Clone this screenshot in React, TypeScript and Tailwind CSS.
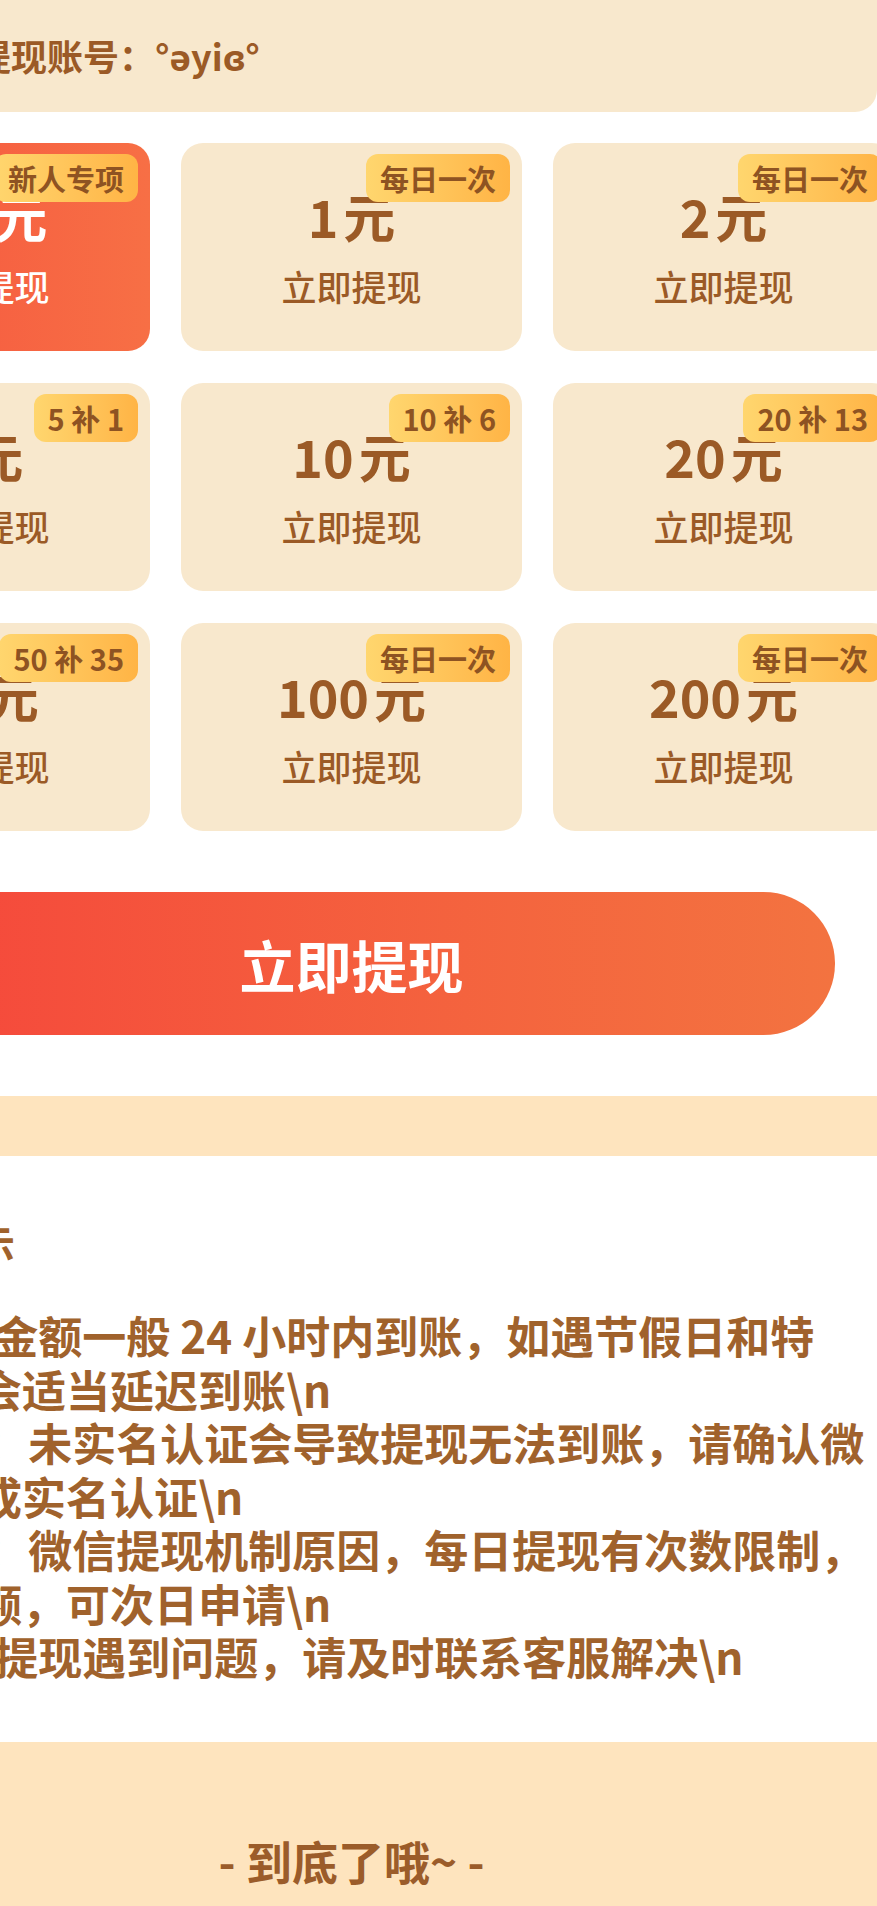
const cards = [
  { amount: "0.3", tag: "新人专项", hot: true },
  { amount: "1", tag: "每日一次" },
  { amount: "2", tag: "每日一次" },
  { amount: "5", tag: "5 补 1" },
  { amount: "10", tag: "10 补 6" },
  { amount: "20", tag: "20 补 13" },
  { amount: "50", tag: "50 补 35" },
  { amount: "100", tag: "每日一次" },
  { amount: "200", tag: "每日一次" },
];

// each tip is pre-split into its display lines
const tips = [
  ["1.  提现金额一般 24 小时内到账，如遇节假日和特", "殊情况会适当延迟到账\\n"],
  ["2. 注意：未实名认证会导致提现无法到账，请确认微", "信已完成实名认证\\n"],
  ["3. 提示：微信提现机制原因，每日提现有次数限制，", "如遇超额，可次日申请\\n"],
  ["4.  如果提现遇到问题，请及时联系客服解决\\n"],
];

function AmountCard({ amount, tag, hot }: { amount: string; tag: string; hot?: boolean }) {
  return (
    <div
      className={`relative h-[208px] rounded-[22px] flex flex-col items-center ${
        hot ? "bg-gradient-to-r from-[#F5503E] to-[#F76F45] text-white" : "bg-[#F8E8CD] text-[#9B5A26]"
      }`}
    >
      <div className="absolute top-[11px] right-[12px] h-[48px] px-[14px] rounded-[12px] bg-gradient-to-r from-[#FFD66E] to-[#FFB445] flex items-center text-[29px] font-semibold text-[#8E5322] leading-none whitespace-pre">
        {tag}
      </div>
      <div className="mt-[47px] text-[52px] leading-[52px] font-bold flex">
        <span>{amount}</span>
        <span className="ml-[5px]">元</span>
      </div>
      <div className="mt-[24px] text-[35px] leading-[40px] font-medium">立即提现</div>
    </div>
  );
}

export default function App() {
  return (
    <div className="w-full overflow-hidden bg-white" style={{ fontFamily: '"Noto Sans CJK SC", "Noto Sans", sans-serif' }}>
      <div className="w-[1145px] -ml-[221px]">
        {/* account bar */}
        <div className="mx-[47px] h-[112px] rounded-b-[22px] bg-[#F8E8CD] flex items-center pl-[149px] pb-[2px]">
          <span className="text-[36px] font-bold text-[#9B5A26]">提现账号：°əyiɞ°</span>
        </div>

        {/* amount grid */}
        <div className="mt-[31px] px-[30px] grid grid-cols-3 gap-x-[31px] gap-y-[32px]">
          {cards.map((c) => (
            <AmountCard key={c.amount} {...c} />
          ))}
        </div>

        <div className="mt-[61px] mx-[89px] h-[143px] rounded-full bg-gradient-to-r from-[#F5443B] to-[#F37340] flex items-center justify-center">
          <span className="text-[56px] font-bold text-white leading-none">立即提现</span>
        </div>

        <div className="mt-[61px] h-[60px] bg-[#FEE4BE]" />

        {/* tips */}
        <div className="pl-[67px] pt-[67px] pb-[58px] text-[#A0622C]">
          <div className="ml-[9px] text-[40px] leading-[40px] font-bold">温馨提示</div>
          <div className="mt-[46px] text-[44px] leading-[53.5px] font-bold">
            {tips.map((lines, i) => (
              <div key={i}>
                {lines.map((l) => (
                  <div key={l} className="whitespace-pre">
                    {l}
                  </div>
                ))}
              </div>
            ))}
          </div>
        </div>

        <div className="h-[164px] bg-[#FEE4BE] flex justify-center">
          <span className="mt-[95px] text-[46px] leading-[46px] font-bold text-[#9B5C2A] whitespace-pre">- 到底了哦~ -</span>
        </div>
      </div>
    </div>
  );
}
